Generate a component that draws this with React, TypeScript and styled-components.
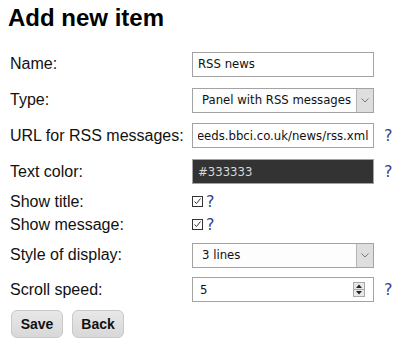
import React, { useLayoutEffect, useRef } from "react";
import styled, { createGlobalStyle } from "styled-components";

const Global = createGlobalStyle`
  html, body { margin: 0; padding: 0; background: #ffffff; }
  body { font-family: "Liberation Sans", Arial, sans-serif; color: #111; }
`;

const Page = styled.div`
  padding: 4px 8px 8px 8px;
`;

const Title = styled.h1`
  margin: 0 0 14px 0;
  font-size: 24px;
  line-height: 28px;
  font-weight: bold;
  color: #000;
`;

const Row = styled.div<{ $h: number }>`
  display: grid;
  grid-template-columns: 184px 182px auto;
  align-items: center;
  height: ${(p) => p.$h}px;
`;

const Label = styled.div`
  padding-left: 2px;
  font-size: 16px;
  color: #111;
  white-space: nowrap;
`;

const Help = styled.span<{ $inline?: boolean }>`
  font-family: "DejaVu Sans", Verdana, sans-serif;
  font-size: 16px;
  color: #33448a;
  padding-left: ${(p) => (p.$inline ? "3px" : "10px")};
  line-height: 1;
`;

const fieldBase = `
  box-sizing: border-box;
  width: 182px;
  height: 25px;
  border: 1px solid #a3a3a3;
  font-family: "DejaVu Sans", Tahoma, Verdana, sans-serif;
  font-size: 11.7px;
  color: #111;
`;

const TextField = styled.input<{ $dark?: boolean }>`
  ${fieldBase}
  padding: 0 5px;
  outline: none;
  background: ${(p) => (p.$dark ? "#333333" : "#ffffff")};
  color: ${(p) => (p.$dark ? "#d8d8d8" : "#111")};
`;

const SelectBox = styled.div`
  ${fieldBase}
  display: flex;
  align-items: center;
  background: #fdfdfd;
`;

const SelectValue = styled.span`
  flex: 1;
  padding-left: 9px;
  white-space: nowrap;
  overflow: hidden;
`;

const DropButton = styled.span`
  width: 16px;
  align-self: stretch;
  display: flex;
  align-items: center;
  justify-content: center;
  background: #dedede;
  border-left: 1px solid #b5b5b5;
`;

const NumberBox = styled.div`
  ${fieldBase}
  display: flex;
  align-items: center;
  background: #ffffff;
  padding: 0 7px 0 7px;
`;

const NumberValue = styled.span`
  flex: 1;
`;

const Spinner = styled.span`
  box-sizing: border-box;
  width: 12px;
  height: 15px;
  border: 1px solid #a8a8a8;
  background: #e8e8e8;
  display: flex;
  flex-direction: column;
  margin-right: 1px;
`;

const SpinHalf = styled.span<{ $top?: boolean }>`
  flex: 1;
  display: flex;
  align-items: center;
  justify-content: center;
  border-bottom: ${(p) => (p.$top ? "1px solid #a8a8a8" : "none")};
`;

const CheckCell = styled.div`
  display: flex;
  align-items: center;
`;

const CheckBox = styled.span`
  box-sizing: border-box;
  width: 11px;
  height: 11px;
  border: 1px solid #333;
  background: #fff;
  display: inline-flex;
  align-items: center;
  justify-content: center;
`;

const Buttons = styled.div`
  display: flex;
  gap: 9px;
  margin-top: 5px;
  padding-left: 3px;
`;

const Button = styled.button`
  box-sizing: border-box;
  width: 52px;
  height: 28px;
  border: 1px solid #c8c8c8;
  border-radius: 6px;
  background: linear-gradient(#e8e8e8, #d8d8d8);
  font-family: "Liberation Sans", Arial, sans-serif;
  font-weight: bold;
  font-size: 14px;
  color: #111;
  padding: 0;
`;

const Chevron = () => (
  <svg width="8" height="5" viewBox="0 0 8 5">
    <path d="M0.5 0.5 L4 4 L7.5 0.5" fill="none" stroke="#777" strokeWidth="1" />
  </svg>
);

const Tri = ({ up }: { up?: boolean }) => (
  <svg width="6" height="4" viewBox="0 0 6 4">
    <path d={up ? "M0 4 L3 0.5 L6 4 Z" : "M0 0 L3 3.5 L6 0 Z"} fill="#222" />
  </svg>
);

const Check = () => (
  <svg width="9" height="9" viewBox="0 0 9 9">
    <path d="M1.5 4.5 L3.5 6.5 L7.5 1.5" fill="none" stroke="#333" strokeWidth="1" />
  </svg>
);

const UrlField = () => {
  const ref = useRef<HTMLInputElement>(null);
  useLayoutEffect(() => {
    if (ref.current) ref.current.scrollLeft = ref.current.scrollWidth;
  }, []);
  return <TextField ref={ref} readOnly defaultValue="http://feeds.bbci.co.uk/news/rss.xml" />;
};

export default function App() {
  return (
    <Page>
      <Global />
      <Title>Add new item</Title>
      <Row $h={36}>
        <Label>Name:</Label>
        <TextField readOnly defaultValue="RSS news" />
      </Row>
      <Row $h={36}>
        <Label>Type:</Label>
        <SelectBox>
          <SelectValue>Panel with RSS messages</SelectValue>
          <DropButton>
            <Chevron />
          </DropButton>
        </SelectBox>
      </Row>
      <Row $h={35}>
        <Label>URL for RSS messages:</Label>
        <UrlField />
        <Help>?</Help>
      </Row>
      <Row $h={37}>
        <Label>Text color:</Label>
        <TextField $dark readOnly defaultValue="#333333" />
        <Help>?</Help>
      </Row>
      <Row $h={23}>
        <Label>Show title:</Label>
        <CheckCell>
          <CheckBox>
            <Check />
          </CheckBox>
          <Help $inline>?</Help>
        </CheckCell>
      </Row>
      <Row $h={23}>
        <Label>Show message:</Label>
        <CheckCell>
          <CheckBox>
            <Check />
          </CheckBox>
          <Help $inline>?</Help>
        </CheckCell>
      </Row>
      <Row $h={38}>
        <Label>Style of display:</Label>
        <SelectBox>
          <SelectValue>3 lines</SelectValue>
          <DropButton>
            <Chevron />
          </DropButton>
        </SelectBox>
      </Row>
      <Row $h={31}>
        <Label>Scroll speed:</Label>
        <NumberBox>
          <NumberValue>5</NumberValue>
          <Spinner>
            <SpinHalf $top>
              <Tri up />
            </SpinHalf>
            <SpinHalf>
              <Tri />
            </SpinHalf>
          </Spinner>
        </NumberBox>
        <Help>?</Help>
      </Row>
      <Buttons>
        <Button>Save</Button>
        <Button>Back</Button>
      </Buttons>
    </Page>
  );
}
